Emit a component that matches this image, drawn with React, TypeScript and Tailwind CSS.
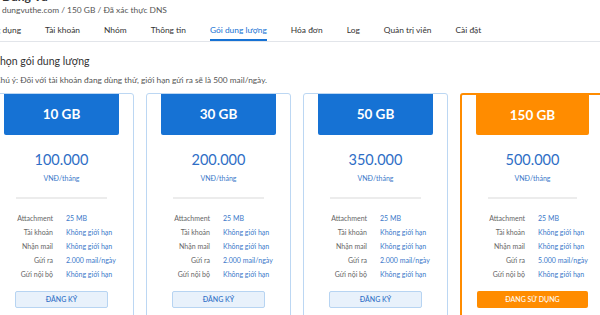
const tabs = [
  "Ứng dụng",
  "Tài khoản",
  "Nhóm",
  "Thông tin",
  "Gói dung lượng",
  "Hóa đơn",
  "Log",
  "Quản trị viên",
  "Cài đặt",
];

type Plan = {
  size: string;
  price: string;
  send: string;
  active?: boolean;
};

const plans: Plan[] = [
  { size: "10 GB", price: "100.000", send: "2.000 mail/ngày" },
  { size: "30 GB", price: "200.000", send: "2.000 mail/ngày" },
  { size: "50 GB", price: "350.000", send: "2.000 mail/ngày" },
  { size: "150 GB", price: "500.000", send: "5.000 mail/ngày", active: true },
];

function PlanCard({ plan }: { plan: Plan }) {
  const features = [
    ["Attachment", "25 MB"],
    ["Tài khoản", "Không giới hạn"],
    ["Nhận mail", "Không giới hạn"],
    ["Gửi ra", plan.send],
    ["Gửi nội bộ", "Không giới hạn"],
  ];

  return (
    <div
      className={
        plan.active
          ? "w-[145px] h-[240px] shrink-0 rounded-[3px] border-2 border-[#ff8c00] bg-white"
          : "w-[145px] h-[240px] shrink-0 rounded-[3px] border border-[#bcd7f3] bg-white"
      }
    >
      {/* Header block */}
      <div
        className={
          plan.active
            ? "mx-[14px] h-[40px] rounded-b-[2px] bg-[#ff8c00] flex items-center justify-center text-white font-bold text-[13.5px]"
            : "mx-[14px] h-[41px] rounded-b-[2px] bg-[#1672d4] flex items-center justify-center text-white font-bold text-[13.5px]"
        }
      >
        {plan.size}
      </div>

      <div className="mt-[16px] text-center text-[14.5px] leading-[18px] text-[#2e6ec6]">
        {plan.price}
      </div>
      <div className="mt-[4px] text-center text-[7px] leading-[10px] text-[#3a78c9]">
        VNĐ/tháng
      </div>

      <div className="mx-[26px] mt-[14px] h-[2px] bg-[#ececec]" />

      {/* Feature list */}
      <div className="mt-[12px]">
        {features.map(([label, value]) => (
          <div key={label} className="flex h-[14px] items-center text-[7px]">
            <span className="ml-[14px] w-[49px] text-right text-[#666]">{label}</span>
            <span className="ml-[13px] text-[#3a78c9]">{value}</span>
          </div>
        ))}
      </div>

      <div className="mt-[10px] flex justify-center">
        {plan.active ? (
          <button className="w-[111px] h-[17px] rounded-[2px] bg-[#ff8c00] text-white text-[7px] font-medium">
            ĐANG SỬ DỤNG
          </button>
        ) : (
          <button className="w-[93px] h-[17px] rounded-[2px] border border-[#b7d4f2] bg-[#e8f1fb] text-[#2e6ec6] text-[7px] font-medium">
            ĐĂNG KÝ
          </button>
        )}
      </div>
    </div>
  );
}

export default function App() {
  return (
    <div
      className="w-[600px] h-[315px] overflow-hidden bg-white"
      style={{ fontFamily: "Lato, 'Noto Sans', sans-serif" }}
    >
      <div className="-ml-[11px] -mt-[10px]">
        {/* Account header */}
        <div className="pl-[13px]">
          <div className="text-[12px] leading-[14px] font-bold text-[#333]">Dũng Vũ</div>
          <div className="text-[8.4px] leading-[13px] text-[#555]">
            dungvuthe.com / 150 GB / Đã xác thực DNS
          </div>
        </div>

        {/* Tabs */}
        <div className="border-b border-[#e2e5ea] w-[640px]">
          <div className="flex gap-[24px] -ml-[4px]">
            {tabs.map((t) => (
              <div
                key={t}
                className={
                  t === "Gói dung lượng"
                    ? "h-[24px] pt-[4px] flex items-center text-[8.4px] text-[#1672d4] border-b-2 border-[#1672d4]"
                    : "h-[24px] pt-[4px] flex items-center text-[8.4px] text-[#333] border-b-2 border-transparent"
                }
              >
                {t}
              </div>
            ))}
          </div>
        </div>

        <div className="mt-[10px] pl-[4px] text-[10.5px] leading-[18px] text-[#333]">
          Chọn gói dung lượng
        </div>
        <div className="mt-[4px] pl-[6px] text-[8.3px] leading-[12px] text-[#555]">
          Chú ý: Đối với tài khoản đang dùng thử, giới hạn gửi ra sẽ là 500 mail/ngày.
        </div>

        <div className="mt-[7px] flex gap-[12px]">
          {plans.map((p) => (
            <PlanCard key={p.size} plan={p} />
          ))}
        </div>
      </div>
    </div>
  );
}
